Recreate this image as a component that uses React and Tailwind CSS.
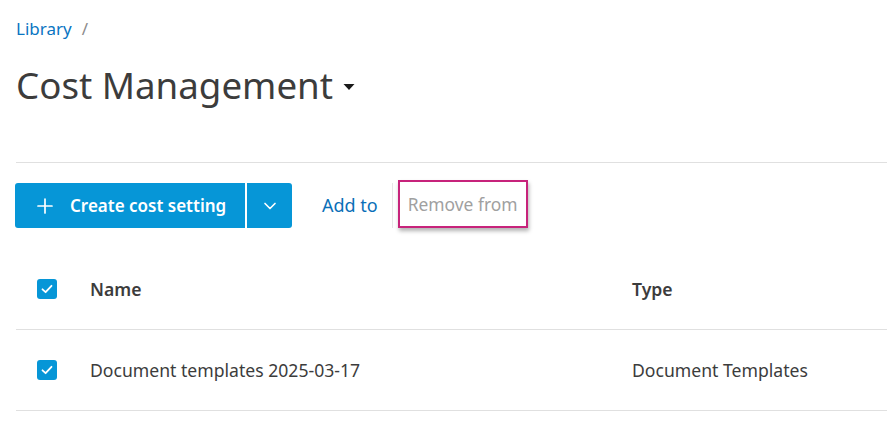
import { Plus, ChevronDown } from "lucide-react";

const Checkbox = () => (
    <span className="flex h-5 w-5 items-center justify-center rounded-[3px] bg-[#0696d7]">
        <svg width="14" height="14" viewBox="0 0 14 14" fill="none">
            <path d="M2.5 7.3 L5.6 10.2 L11.5 3.8" stroke="white" strokeWidth="1.8" strokeLinecap="round" strokeLinejoin="round" />
        </svg>
    </span>
);

const Row = ({ name, type, header }) => (
    <div className="flex h-[81px] items-center border-b border-[#e0e0e0] text-[17.6px]">
        <div className="w-[74px] pl-[21px]">
            <Checkbox />
        </div>
        <div className={`w-[542px] ${header ? "font-semibold text-[#3c3c3c]" : "text-[#3c3c3c]"}`}>
            {name}
        </div>
        <div className={header ? "font-semibold text-[#3c3c3c]" : "text-[#3c3c3c]"}>{type}</div>
    </div>
);

export default function App() {
    return (
        <div className="h-[429px] w-[887px] overflow-hidden bg-white pl-4 font-['Noto_Sans',sans-serif] text-[17px]">
            <div className="flex h-[57px] items-center">
                <span className="text-[#0a75c2]">Library</span>
                <span className="ml-[10px] text-[#8c8c8c]">/</span>
            </div>
            <div className="flex h-[56px] items-center">
                <h1 className="text-[36.7px] leading-none text-[#3c3c3c]">Cost Management</h1>
                <svg width="12" height="8" viewBox="0 0 12 8" className="ml-[10px] mt-[4px]">
                    <path d="M0.5 1 H11.5 L6 7 Z" fill="#1a1a1a" />
                </svg>
            </div>
            <div className="mt-[49px] border-t border-[#e0e0e0]" />
            <div className="mt-5 flex h-[45px] items-stretch">
                <button className="-ml-px flex w-[230px] items-center gap-[13px] rounded-l-[3px] bg-[#0696d7] pl-[18px] font-semibold text-white">
                    <Plus size={24} strokeWidth={1.7} />
                    Create cost setting
                </button>
                <button className="ml-[2px] flex w-[45px] items-center justify-center rounded-r-[3px] bg-[#0696d7] text-white">
                    <ChevronDown size={20} strokeWidth={2} />
                </button>
                <span className="ml-[30px] flex items-center text-[18px] text-[#0a6fb8]">Add to</span>
                <span className="ml-[14px] w-px bg-[#e6e6e6]" />
                <span className="ml-[5px] mt-[-3px] flex items-center border-2 border-[#c7237b] px-[8px] text-[17.4px] text-[#a0a0a0] shadow-[1px_3px_4px_rgba(0,0,0,0.3)]">
                    Remove from
                </span>
            </div>
            <div className="mt-[21px]">
                <Row name="Name" type="Type" header />
                <Row name="Document templates 2025-03-17" type="Document Templates" />
            </div>
        </div>
    );
}
